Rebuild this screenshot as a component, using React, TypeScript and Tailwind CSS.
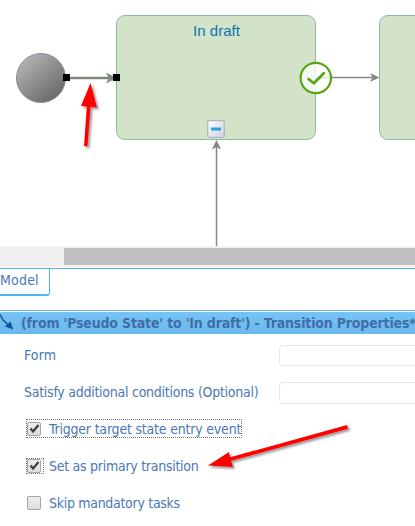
import type { ReactNode } from "react";

function Diagram() {
  return (
    <div className="relative h-[246px] w-full overflow-hidden">
      <div className="absolute left-[116px] top-[15px] h-[125px] w-[200px] rounded-[9px] border border-[#8db9a0] bg-[#d3e3c9]" />
      <div className="absolute left-[379px] top-[15px] h-[125px] w-[200px] rounded-[9px] border border-[#8db9a0] bg-[#d3e3c9]" />
      <svg className="absolute left-0 top-0" width="415" height="246" viewBox="0 0 415 246">
        <defs>
          <linearGradient id="ball" x1="0.1" y1="0.1" x2="0.8" y2="0.9">
            <stop offset="0" stopColor="#b5b5b5" />
            <stop offset="1" stopColor="#6b6b6b" />
          </linearGradient>
          <linearGradient id="toggle" x1="0" y1="0" x2="1" y2="1">
            <stop offset="0" stopColor="#ffffff" />
            <stop offset="1" stopColor="#ccd1e2" />
          </linearGradient>
        </defs>
        <text x="193" y="36" textLength="47" fontSize="15" fill="#0c74ae" fontFamily="'Liberation Sans', Arial, sans-serif">In draft</text>
        <circle cx="41" cy="78" r="24.5" fill="url(#ball)" stroke="#8f88a8" />
        <path d="M69 78H112" stroke="#82897e" strokeWidth="2.400" />
        <path d="M106.500 73L116 78l-9.500 5 2.500-5z" fill="#82897e" stroke="#82897e" strokeWidth=".5" />
        <path d="M63 74h7v7H63zM113 74h7v7H113z" fill="#000" />
        <path d="M316 77.500H375" stroke="#858a80" strokeWidth="1.400" />
        <path d="M370 73l9.500 4.500L370 82l2.500-4.500z" fill="#858a80" />
        <circle cx="315.800" cy="78" r="15.200" fill="#fff" fillOpacity=".78" stroke="#57a510" strokeWidth="2.200" />
        <path d="M308.500 79l5.300 4.300 10-10" fill="none" stroke="#57a510" strokeWidth="2.700" strokeLinecap="round" strokeLinejoin="round" />
        <path d="M216.500 143V246" stroke="#82897e" strokeWidth="1.500" />
        <path d="M212 149.500l4.500-9.500 4.500 9.500-4.500-2.500z" fill="#82897e" />
        <rect x="207.700" y="120.700" width="16.600" height="16.600" rx="1.500" fill="url(#toggle)" stroke="#acb7c0" strokeWidth="1.300" />
        <rect x="211" y="127.500" width="10" height="3" fill="#2f9de0" />
      </svg>
    </div>
  );
}

function Pointers() {
  return (
    <svg className="pointer-events-none absolute left-0 top-0" width="415" height="526" viewBox="0 0 415 526">
      <defs>
        <filter id="shade" x="-20%" y="-20%" width="150%" height="150%">
          <feDropShadow dx="2" dy="2" stdDeviation="1" floodColor="#000" floodOpacity=".4" />
        </filter>
      </defs>
      <g fill="#fe0000" filter="url(#shade)">
        <path d="M90.500 83L97 107.500l-6.500-.5L87.500 146.500l-3.500-.5L86.800 106.500 81 106z" />
        <path d="M208 465.500L229 452l1.200 5.300L347 425l1 3.700L231 460.800l2 6.200z" />
      </g>
    </svg>
  );
}

function Check({ checked = false }: { checked?: boolean }) {
  return (
    <span className="flex h-[14px] w-[14px] shrink-0 items-center justify-center rounded-[2px] border border-[#a5a5a5] bg-gradient-to-b from-[#eeeeee] to-[#dcdcdc]">
      {checked && (
        <svg width="11" height="11" viewBox="0 0 11 11" className="shrink-0">
          <path d="M1.500 5.500l2.600 3L9.500 2" fill="none" stroke="#404040" strokeWidth="2.300" />
        </svg>
      )}
    </span>
  );
}

function Field({ children, input }: { children: ReactNode; input: string }) {
  return (
    <div className="flex h-[37px] items-start">
      <div className="flex h-[37px] w-[255px] shrink-0 items-center">{children}</div>
      <div className={`w-[180px] shrink-0 rounded-[4px] border border-[#e3e8f4] bg-white ${input}`} />
    </div>
  );
}

export default function App() {
  return (
    <div className="relative h-[526px] w-[415px] overflow-hidden bg-white font-['DejaVu_Sans_Condensed','DejaVu_Sans',sans-serif] text-[14px] leading-[18px] whitespace-nowrap text-[#4a78b5]">
      <Diagram />
      <div className="flex h-[21px] bg-[#f0f0f0] py-[2px] pl-[64px]">
        <div className="h-[17px] flex-1 bg-[#c0c0c0]" />
      </div>
      <div className="mt-px h-[42px] border-t border-[#58b1e6]">
        <div className="h-[27px] w-[50px] rounded-br-[3px] border-r border-b-2 border-[#4db7f3] pt-[2px]">
          <span className="tracking-[0.200px]">Model</span>
        </div>
      </div>
      <div className="h-[24px] border-t border-[#58b1e6] pt-px">
        <div className="flex h-[22px] items-center bg-gradient-to-b from-[#78c3f5] to-[#69b8ec] font-bold text-[#3f6ea8]">
          <svg width="21" height="22" viewBox="0 0 21 22" className="shrink-0">
            <path d="M0 2.500l3 5.500 6 5.500" fill="none" stroke="#14529c" strokeWidth="1.500" />
            <path d="M13 17.500L5 14.500 10.500 9.500z" fill="#14529c" />
          </svg>
          <span className="tracking-[-0.180px]">(from 'Pseudo State' to 'In draft') - Transition Properties*</span>
        </div>
      </div>
      <div className="pl-[24px] pt-[2px]">
        <Field input="mt-[9px] h-[21px]"><span className="tracking-[0.100px]">Form</span></Field>
        <Field input="mt-[9px] h-[22px]"><span className="tracking-[-0.260px]">Satisfy additional conditions (Optional)</span></Field>
        <div className="flex h-[37px] items-center">
          <div className="ml-[2px] flex h-[19px] w-[216px] items-center border border-dotted border-[#777]">
            <Check checked />
            <span className="ml-[8px] tracking-[-0.200px]">Trigger target state entry event</span>
          </div>
        </div>
        <div className="flex h-[37px] items-center">
          <div className="ml-[2px] flex h-[16px] w-[18px] items-center border border-dotted border-[#777]"><Check checked /></div>
          <span className="ml-[5px] tracking-[-0.270px]">Set as primary transition</span>
        </div>
        <div className="flex h-[37px] items-center pl-[3px]">
          <Check />
          <span className="ml-[8px] tracking-[-0.300px]">Skip mandatory tasks</span>
        </div>
      </div>
      <Pointers />
    </div>
  );
}
